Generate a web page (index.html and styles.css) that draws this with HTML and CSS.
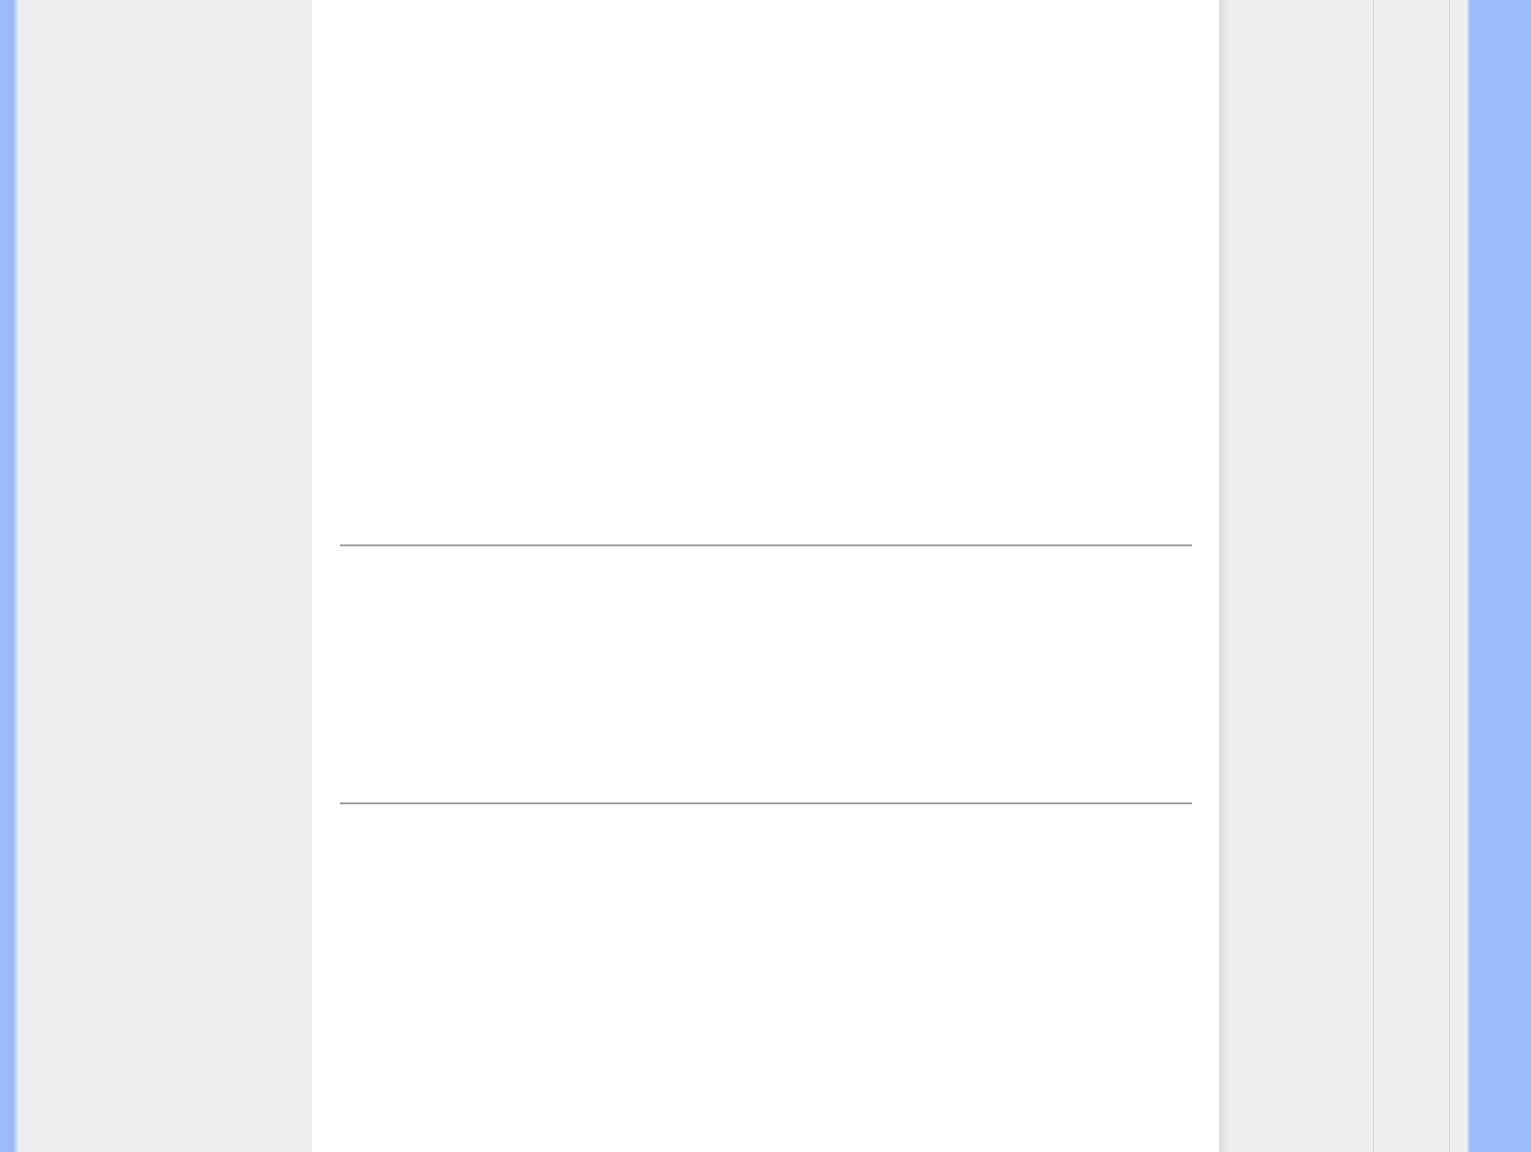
FILE: index.html
```html
<!DOCTYPE html>
<html lang="en">
<head>
  <meta charset="UTF-8">
  <title>Page</title>
  <link rel="stylesheet" href="styles.css">
</head>
<body>
  <div class="frame">
    <div class="edge edge-left"></div>
    <div class="side side-left"></div>
    <main class="page">
      <div class="block block-top"></div>
      <hr class="rule">
      <div class="block block-mid"></div>
      <hr class="rule">
      <div class="block block-bottom"></div>
    </main>
    <div class="shadow"></div>
    <div class="side side-right"></div>
    <div class="side side-narrow"></div>
    <div class="side side-gap"></div>
    <div class="edge edge-right"></div>
  </div>
</body>
</html>
```

FILE: styles.css
```css
* {
  margin: 0;
  padding: 0;
  box-sizing: border-box;
}

body {
  background: #efefef;
  font-family: "Liberation Sans", Arial, sans-serif;
}

.frame {
  display: flex;
  height: 100vh;
  overflow: hidden;
}

.edge {
  background: #9bbcf8;
}

.edge-left {
  width: 18px;
  background: linear-gradient(to right, #9bbcf8 0, #9bbcf8 14px, #b7cdf7 15px, #d6e1f5 16px, #c4d6f7 17px, #e7ebf2 18px);
}

.edge-right {
  width: 64px;
  background: linear-gradient(to right, #e4e9f2 0, #cbd9f5 1px, #b4c9f7 2px, #a3c0f8 3px, #9bbcf8 4px, #9bbcf8 100%);
}

.side {
  background: #efefef;
}

.side-left {
  width: 294px;
}

.page {
  width: 907px;
  background: #fff;
  padding: 0 27px 0 28px;
}

.shadow {
  width: 12px;
  background: linear-gradient(to right, #dcdcdc, #efefef);
}

.side-right {
  width: 143px;
  border-right: 1px solid #d0dbea;
}

.side-narrow {
  width: 76px;
  border-right: 1px solid #d0dbea;
}

.side-gap {
  width: 17px;
}

.block-top {
  height: 544px;
}

.block-mid {
  height: 255px;
}

.rule {
  border: 0;
  border-top: 1px solid #c8c8c8;
  border-bottom: 1px solid #e2e2e2;
  height: 3px;
  background: #959595;
}
```
